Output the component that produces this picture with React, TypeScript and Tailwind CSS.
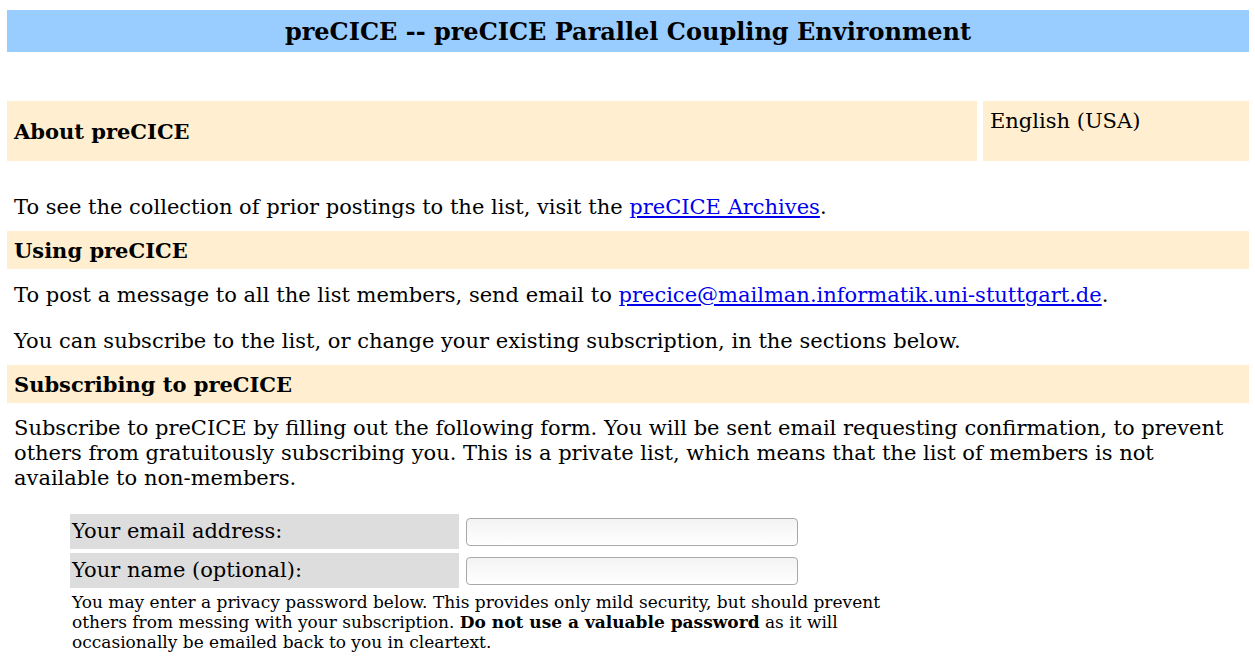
export default function App() {
  const serif = { fontFamily: '"DejaVu Serif", serif' };
  return (
    <div className="min-h-screen bg-white pt-[10px] pr-[6px] pl-[7px] text-black" style={serif}>
      <div className="flex h-[42px] items-center justify-center bg-[#99ccff] pt-[2px] text-[24px] font-bold">
        preCICE -- preCICE Parallel Coupling Environment
      </div>

      <div className="mt-[49px] flex gap-[6px]">
        <div className="flex h-[60px] flex-1 items-center bg-[#ffefd0] px-[7px] pt-[2px] text-[21px] font-bold">
          About preCICE
        </div>
        <div className="h-[60px] w-[266px] bg-[#ffefd0] px-[7px] pt-[8px] text-[21px] leading-[25px]">
          English (USA)
        </div>
      </div>

      <p className="mt-[34px] mb-[11px] px-[7px] text-[21px] leading-[25px]">
        To see the collection of prior postings to the list, visit the{' '}
        <a href="#" className="text-[#0000ee] underline">
          preCICE Archives
        </a>
        .
      </p>

      <div className="flex h-[38px] items-center bg-[#ffefd0] px-[7px] pt-[1px] text-[21px] font-bold">
        Using preCICE
      </div>

      <p className="mt-[14px] px-[7px] text-[21px] leading-[25px]">
        To post a message to all the list members, send email to{' '}
        <a href="#" className="text-[#0000ee] underline">
          precice@mailman.informatik.uni-stuttgart.de
        </a>
        .
      </p>
      <p className="mt-[21px] mb-[11px] px-[7px] text-[21px] leading-[25px]">
        You can subscribe to the list, or change your existing subscription, in the sections below.
      </p>

      <div className="flex h-[38px] items-center bg-[#ffefd0] px-[7px] pt-[1px] text-[21px] font-bold">
        Subscribing to preCICE
      </div>

      <p className="mt-[13px] px-[7px] text-[21px] leading-[25px]">
        Subscribe to preCICE by filling out the following form. You will be sent email requesting confirmation, to
        prevent others from gratuitously subscribing you. This is a private list, which means that the list of
        members is not available to non-members.
      </p>

      <div className="mt-[23px] ml-[63px] flex flex-col gap-[4px]">
        <div className="flex items-center gap-[4px]">
          <div className="flex h-[35px] w-[389px] items-center bg-[#dddddd] px-[2px] text-[21px]">
            Your email address:
          </div>
          <input
            type="text"
            className="ml-[3px] h-[28px] w-[332px] rounded-[4px] border border-[#a9a9a9] bg-gradient-to-b from-[#f3f3f3] to-white"
          />
        </div>
        <div className="flex items-center gap-[4px]">
          <div className="flex h-[35px] w-[389px] items-center bg-[#dddddd] px-[2px] text-[21px]">
            Your name (optional):
          </div>
          <input
            type="text"
            className="ml-[3px] h-[28px] w-[332px] rounded-[4px] border border-[#a9a9a9] bg-gradient-to-b from-[#f3f3f3] to-white"
          />
        </div>
        <p className="w-[830px] px-[2px] text-[17px] leading-[20px]">
          You may enter a privacy password below. This provides only mild security, but should prevent others from
          messing with your subscription. <b>Do not use a valuable password</b> as it will occasionally be emailed
          back to you in cleartext.
        </p>
      </div>
    </div>
  );
}
